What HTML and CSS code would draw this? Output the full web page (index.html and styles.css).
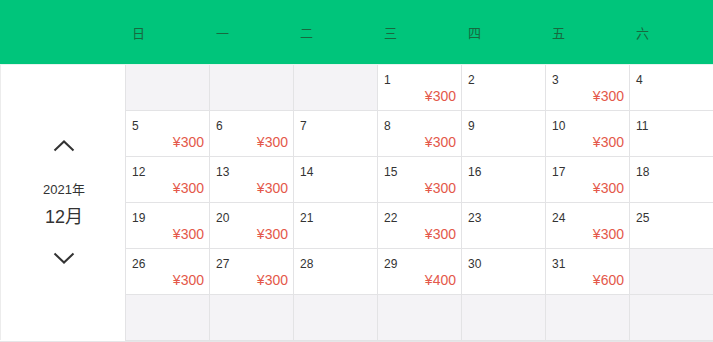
FILE: index.html
```html
<!DOCTYPE html>
<html lang="zh">
<head>
<meta charset="utf-8">
<link rel="stylesheet" href="styles.css">
</head>
<body>
<div class="cal">
  <div class="head">
    <div class="head-spacer"></div>
    <div class="wd">日</div><div class="wd">一</div><div class="wd">二</div><div class="wd">三</div><div class="wd">四</div><div class="wd">五</div><div class="wd">六</div>
  </div>
  <div class="main">
    <div class="side">
      <svg class="chev" width="22" height="12" viewBox="0 0 22 12"><path d="M1.5 10.5 L11 1.5 L20.5 10.5" fill="none" stroke="#333" stroke-width="2"/></svg>
      <div class="year">2021年</div>
      <div class="month">12月</div>
      <svg class="chev down" width="22" height="12" viewBox="0 0 22 12"><path d="M1.5 1.5 L11 10.5 L20.5 1.5" fill="none" stroke="#333" stroke-width="2"/></svg>
    </div>
    <div class="grid">
      <div class="cell empty"></div><div class="cell empty"></div><div class="cell empty"></div>
      <div class="cell"><span class="num">1</span><span class="price">¥300</span></div>
      <div class="cell"><span class="num">2</span></div>
      <div class="cell"><span class="num">3</span><span class="price">¥300</span></div>
      <div class="cell"><span class="num">4</span></div>

      <div class="cell"><span class="num">5</span><span class="price">¥300</span></div>
      <div class="cell"><span class="num">6</span><span class="price">¥300</span></div>
      <div class="cell"><span class="num">7</span></div>
      <div class="cell"><span class="num">8</span><span class="price">¥300</span></div>
      <div class="cell"><span class="num">9</span></div>
      <div class="cell"><span class="num">10</span><span class="price">¥300</span></div>
      <div class="cell"><span class="num">11</span></div>

      <div class="cell"><span class="num">12</span><span class="price">¥300</span></div>
      <div class="cell"><span class="num">13</span><span class="price">¥300</span></div>
      <div class="cell"><span class="num">14</span></div>
      <div class="cell"><span class="num">15</span><span class="price">¥300</span></div>
      <div class="cell"><span class="num">16</span></div>
      <div class="cell"><span class="num">17</span><span class="price">¥300</span></div>
      <div class="cell"><span class="num">18</span></div>

      <div class="cell"><span class="num">19</span><span class="price">¥300</span></div>
      <div class="cell"><span class="num">20</span><span class="price">¥300</span></div>
      <div class="cell"><span class="num">21</span></div>
      <div class="cell"><span class="num">22</span><span class="price">¥300</span></div>
      <div class="cell"><span class="num">23</span></div>
      <div class="cell"><span class="num">24</span><span class="price">¥300</span></div>
      <div class="cell"><span class="num">25</span></div>

      <div class="cell"><span class="num">26</span><span class="price">¥300</span></div>
      <div class="cell"><span class="num">27</span><span class="price">¥300</span></div>
      <div class="cell"><span class="num">28</span></div>
      <div class="cell"><span class="num">29</span><span class="price">¥400</span></div>
      <div class="cell"><span class="num">30</span></div>
      <div class="cell"><span class="num">31</span><span class="price">¥600</span></div>
      <div class="cell empty"></div>

      <div class="cell empty"></div><div class="cell empty"></div><div class="cell empty"></div><div class="cell empty"></div><div class="cell empty"></div><div class="cell empty"></div><div class="cell empty"></div>
    </div>
  </div>
  <div class="foot"></div>
</div>
</body>
</html>
```
FILE: styles.css
```css
* { box-sizing: border-box; }
html, body { margin: 0; padding: 0; background: #fff; }
body {
  font-family: "Liberation Sans", "Noto Sans CJK SC", sans-serif;
  color: #333;
  width: 713px;
  height: 342px;
  overflow: hidden;
}
.cal { width: 713px; }
.head {
  display: flex;
  height: 64px;
  background: #00c57b;
  align-items: center;
  border-bottom: 1px solid #e6f4ee;
  box-sizing: content-box;
}
.head-spacer { width: 125px; flex: none; }
.wd {
  width: 84px;
  flex: none;
  padding-left: 7px;
  font-size: 13px;
  color: #17693f;
  font-family: "Noto Sans CJK SC", sans-serif;
  line-height: 1;
}
.main { display: flex; }
.side {
  width: 125px;
  flex: none;
  height: 275px;
  border-left: 1px solid #ececec;
  display: flex;
  flex-direction: column;
  align-items: center;
  padding-left: 2px;
}
.chev { display: block; margin-top: 75px; }
.chev.down { margin-top: 25px; }
.year {
  margin-top: 31px;
  font-size: 13px;
  line-height: 14px;
}
.month {
  margin-top: 10px;
  font-size: 18px;
  line-height: 20px;
}
.grid {
  display: grid;
  grid-template-columns: repeat(7, 84px);
  grid-auto-rows: 46px;
}
.cell {
  border-left: 1px solid #e3e3e5;
  border-bottom: 1px solid #e3e3e5;
  padding: 8px 5px 0 6px;
  display: flex;
  flex-direction: column;
  background: #fff;
}
.cell.empty { background: #f4f3f6; }
.num {
  font-size: 12px;
  line-height: 14px;
  color: #333;
}
.price {
  align-self: flex-end;
  font-size: 14px;
  line-height: 16px;
  margin-top: 1px;
  color: #e4584a;
}
.foot {
  height: 2px;
  background: #e6e6e8;
}
```
